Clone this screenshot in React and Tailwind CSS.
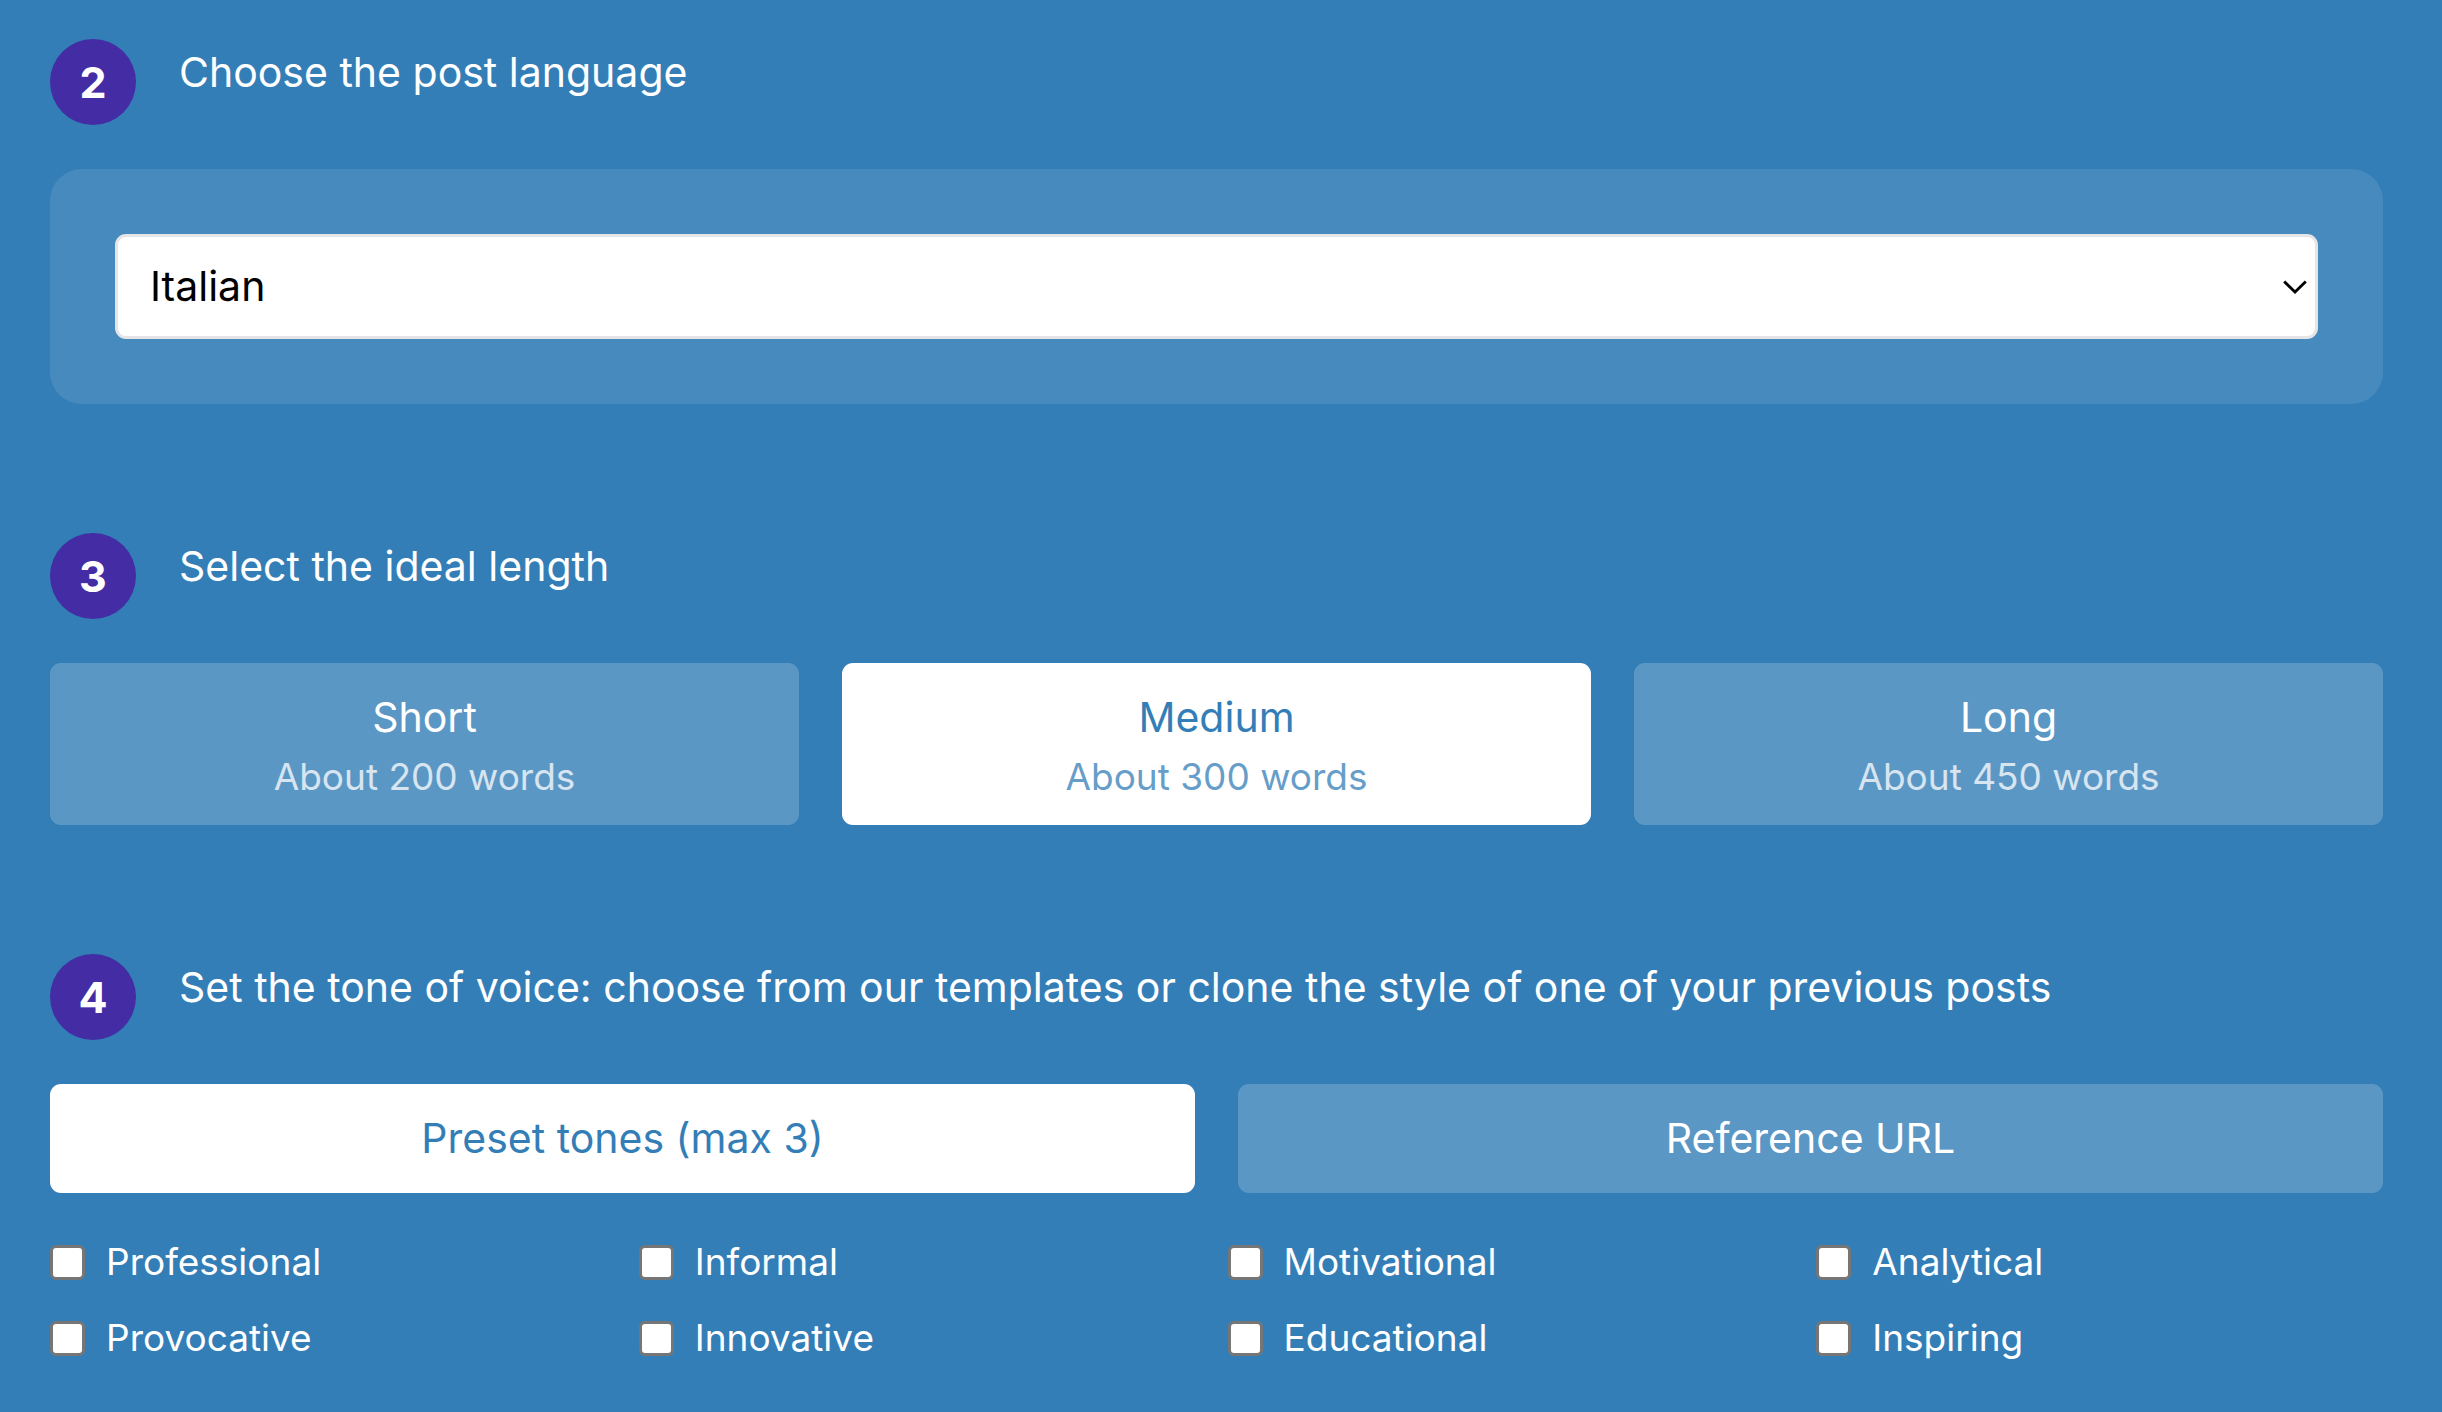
import React, { useState } from "react";

const LANGUAGES = ["Italian", "English", "Spanish", "French", "German"];

const LENGTHS = [
  { id: "short", label: "Short", hint: "About 200 words" },
  { id: "medium", label: "Medium", hint: "About 300 words" },
  { id: "long", label: "Long", hint: "About 450 words" },
];

const TONE_MODES = [
  { id: "preset", label: "Preset tones (max 3)" },
  { id: "reference", label: "Reference URL" },
];

const TONES = [
  "Professional",
  "Informal",
  "Motivational",
  "Analytical",
  "Provocative",
  "Innovative",
  "Educational",
  "Inspiring",
];

const MAX_TONES = 3;

const StepHeader = ({ number, id, children }) => (
  <div className="mb-[44px] flex items-start gap-[43px]">
    <span className="flex size-[86px] shrink-0 items-center justify-center rounded-full bg-[#442ca5] text-[43px] leading-none font-bold">
      {number}
    </span>
    <h2 id={id} className="text-[41px] leading-[66px]">
      {children}
    </h2>
  </div>
);

const OptionButton = ({ selected, onClick, children }) => (
  <button
    type="button"
    aria-pressed={selected}
    onClick={onClick}
    className={`rounded-[11px] px-6 py-[22px] text-center text-[41px] leading-[65px] ${
      selected ? "bg-white text-[#337eb7]" : "bg-white/20 text-white"
    }`}
  >
    {children}
  </button>
);

const App = () => {
  const [language, setLanguage] = useState("Italian");
  const [length, setLength] = useState("medium");
  const [toneMode, setToneMode] = useState("preset");
  const [tones, setTones] = useState([]);

  const toggleTone = (tone) => {
    if (tones.includes(tone)) {
      setTones(tones.filter((t) => t !== tone));
    } else if (tones.length < MAX_TONES) {
      setTones([...tones, tone]);
    }
  };

  return (
    <main className="flex min-h-screen flex-col gap-[129px] bg-[#337eb7] pt-[39px] pr-[59px] pb-[46px] pl-[50px] font-['Inter',sans-serif] text-white">
      {/* Language */}
      <section>
        <StepHeader number={2} id="language-title">
          Choose the post language
        </StepHeader>
        <div className="rounded-[32px] bg-white/10 p-[65px]">
          <div className="relative">
            <select
              aria-labelledby="language-title"
              value={language}
              onChange={(e) => setLanguage(e.target.value)}
              className="block h-[105px] w-full appearance-none rounded-[11px] border-[3px] border-[#e5e5e8] bg-white px-8 text-[41px] text-black"
            >
              {LANGUAGES.map((lang) => (
                <option key={lang}>{lang}</option>
              ))}
            </select>
            <svg
              className="pointer-events-none absolute top-1/2 right-[11px] h-[14px] w-6 -translate-y-1/2"
              viewBox="0 0 24 14"
              fill="none"
              stroke="black"
              strokeWidth="2.8"
              aria-hidden="true"
            >
              <path d="M1.2 1.5L12 12L22.8 1.5" />
            </svg>
          </div>
        </div>
      </section>

      {/* Length */}
      <section>
        <StepHeader number={3}>Select the ideal length</StepHeader>
        <div className="grid grid-cols-3 gap-[43px]">
          {LENGTHS.map(({ id, label, hint }) => (
            <OptionButton
              key={id}
              selected={length === id}
              onClick={() => setLength(id)}
            >
              <span className="block">{label}</span>
              <span className="block text-[37px] leading-[53px] opacity-75">
                {hint}
              </span>
            </OptionButton>
          ))}
        </div>
      </section>

      {/* Tone of voice */}
      <section>
        <StepHeader number={4}>
          Set the tone of voice: choose from our templates or clone the style of
          one of your previous posts
        </StepHeader>
        <div className="grid grid-cols-2 gap-[43px]">
          {TONE_MODES.map(({ id, label }) => (
            <OptionButton
              key={id}
              selected={toneMode === id}
              onClick={() => setToneMode(id)}
            >
              {label}
            </OptionButton>
          ))}
        </div>
        <div className="mt-[42px] grid grid-cols-4 gap-[22px]">
          {TONES.map((tone) => (
            <label
              key={tone}
              className="flex items-center gap-[21px] text-[37px] leading-[54px]"
            >
              <input
                type="checkbox"
                checked={tones.includes(tone)}
                onChange={() => toggleTone(tone)}
                className="size-[35px] shrink-0 appearance-none rounded-[6px] border-[3px] border-[#767676] bg-white checked:bg-[#442ca5]"
              />
              {tone}
            </label>
          ))}
        </div>
      </section>
    </main>
  );
};

export default App;
